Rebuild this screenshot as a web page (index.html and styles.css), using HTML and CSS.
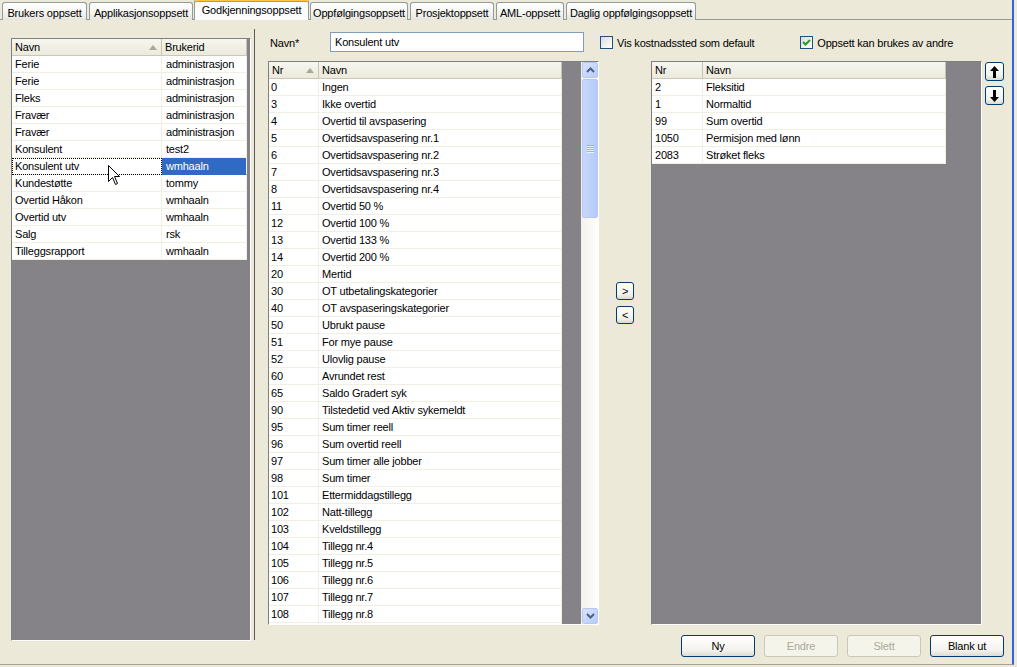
FILE: index.html
```html
<!DOCTYPE html>
<html>
<head>
<meta charset="utf-8">
<link rel="stylesheet" href="styles.css">
</head>
<body>
<div class="window">
  <div class="tabs">
    <div class="tab w1">Brukers oppsett</div>
    <div class="tab w2">Applikasjonsoppsett</div>
    <div class="tab active w3">Godkjenningsoppsett</div>
    <div class="tab w4">Oppfølgingsoppsett</div>
    <div class="tab w5">Prosjektoppsett</div>
    <div class="tab w6">AML-oppsett</div>
    <div class="tab w7">Daglig oppfølgingsoppsett</div>
  </div>
  <div class="page">
    <div class="left-col">
      <div class="grid grid-left">
        <div class="tbl tbl-left">
          <div class="hdr"><div class="hc">Navn<svg class="sort" width="8" height="5" viewBox="0 0 8 5"><polygon points="4,0 8,5 0,5" fill="#aca899"/></svg></div><div class="hc">Brukerid</div></div>
          <div class="row"><div class="c">Ferie</div><div class="c c2">administrasjon</div></div>
          <div class="row"><div class="c">Ferie</div><div class="c c2">administrasjon</div></div>
          <div class="row"><div class="c">Fleks</div><div class="c c2">administrasjon</div></div>
          <div class="row"><div class="c">Fravær</div><div class="c c2">administrasjon</div></div>
          <div class="row"><div class="c">Fravær</div><div class="c c2">administrasjon</div></div>
          <div class="row"><div class="c">Konsulent</div><div class="c c2">test2</div></div>
          <div class="row"><div class="c focus">Konsulent utv</div><div class="c c2 sel">wmhaaln</div></div>
          <div class="row"><div class="c">Kundestøtte</div><div class="c c2">tommy</div></div>
          <div class="row"><div class="c">Overtid Håkon</div><div class="c c2">wmhaaln</div></div>
          <div class="row"><div class="c">Overtid utv</div><div class="c c2">wmhaaln</div></div>
          <div class="row"><div class="c">Salg</div><div class="c c2">rsk</div></div>
          <div class="row"><div class="c">Tilleggsrapport</div><div class="c c2">wmhaaln</div></div>
        </div>
        <svg class="cursor" width="13" height="21" viewBox="0 0 13 21"><path d="M0.5 0.5 L0.5 16.5 L4.5 12.5 L7.5 19.5 L9.5 18.5 L6.5 11.5 L11.5 11.5 Z" fill="#fff" stroke="#000" stroke-width="1"/></svg>
      </div>
    </div>
    <div class="splitter"></div>
    <div class="main">
      <div class="form-row">
        <label class="lbl">Navn*</label>
        <div class="input">Konsulent utv</div>
        <div class="chk chk1"><span class="box"></span><span>Vis kostnadssted som default</span></div>
        <div class="chk chk2"><span class="box"><svg width="11" height="11" viewBox="0 0 11 11"><path d="M2 5 L4.5 7.5 L9 3" fill="none" stroke="#21a121" stroke-width="2"/></svg></span><span>Oppsett kan brukes av andre</span></div>
      </div>
      <div class="lists">
        <div class="grid grid-mid">
          <div class="tbl tbl-mid">
            <div class="hdr"><div class="hc">Nr<svg class="sort" width="8" height="5" viewBox="0 0 8 5"><polygon points="4,0 8,5 0,5" fill="#aca899"/></svg></div><div class="hc">Navn</div></div>
            <div class="row"><div class="c">0</div><div class="c">Ingen</div></div>
            <div class="row"><div class="c">3</div><div class="c">Ikke overtid</div></div>
            <div class="row"><div class="c">4</div><div class="c">Overtid til avspasering</div></div>
            <div class="row"><div class="c">5</div><div class="c">Overtidsavspasering nr.1</div></div>
            <div class="row"><div class="c">6</div><div class="c">Overtidsavspasering nr.2</div></div>
            <div class="row"><div class="c">7</div><div class="c">Overtidsavspasering nr.3</div></div>
            <div class="row"><div class="c">8</div><div class="c">Overtidsavspasering nr.4</div></div>
            <div class="row"><div class="c">11</div><div class="c">Overtid 50 %</div></div>
            <div class="row"><div class="c">12</div><div class="c">Overtid 100 %</div></div>
            <div class="row"><div class="c">13</div><div class="c">Overtid 133 %</div></div>
            <div class="row"><div class="c">14</div><div class="c">Overtid 200 %</div></div>
            <div class="row"><div class="c">20</div><div class="c">Mertid</div></div>
            <div class="row"><div class="c">30</div><div class="c">OT utbetalingskategorier</div></div>
            <div class="row"><div class="c">40</div><div class="c">OT avspaseringskategorier</div></div>
            <div class="row"><div class="c">50</div><div class="c">Ubrukt pause</div></div>
            <div class="row"><div class="c">51</div><div class="c">For mye pause</div></div>
            <div class="row"><div class="c">52</div><div class="c">Ulovlig pause</div></div>
            <div class="row"><div class="c">60</div><div class="c">Avrundet rest</div></div>
            <div class="row"><div class="c">65</div><div class="c">Saldo Gradert syk</div></div>
            <div class="row"><div class="c">90</div><div class="c">Tilstedetid ved Aktiv sykemeldt</div></div>
            <div class="row"><div class="c">95</div><div class="c">Sum timer reell</div></div>
            <div class="row"><div class="c">96</div><div class="c">Sum overtid reell</div></div>
            <div class="row"><div class="c">97</div><div class="c">Sum timer alle jobber</div></div>
            <div class="row"><div class="c">98</div><div class="c">Sum timer</div></div>
            <div class="row"><div class="c">101</div><div class="c">Ettermiddagstillegg</div></div>
            <div class="row"><div class="c">102</div><div class="c">Natt-tillegg</div></div>
            <div class="row"><div class="c">103</div><div class="c">Kveldstillegg</div></div>
            <div class="row"><div class="c">104</div><div class="c">Tillegg nr.4</div></div>
            <div class="row"><div class="c">105</div><div class="c">Tillegg nr.5</div></div>
            <div class="row"><div class="c">106</div><div class="c">Tillegg nr.6</div></div>
            <div class="row"><div class="c">107</div><div class="c">Tillegg nr.7</div></div>
            <div class="row"><div class="c">108</div><div class="c">Tillegg nr.8</div></div>
            <div class="row"><div class="c"></div><div class="c"></div></div>
          </div>
          <div class="fill"></div>
          <div class="vscroll">
            <div class="sbtn"><svg width="9" height="6" viewBox="0 0 9 6"><path d="M1 5 L4.5 1.5 L8 5" fill="none" stroke="#4d6185" stroke-width="2"/></svg></div>
            <div class="thumb"><span class="grip"></span><span class="grip"></span><span class="grip"></span><span class="grip"></span></div>
            <div class="track"></div>
            <div class="sbtn"><svg width="9" height="6" viewBox="0 0 9 6"><path d="M1 1 L4.5 4.5 L8 1" fill="none" stroke="#4d6185" stroke-width="2"/></svg></div>
          </div>
        </div>
        <div class="move-col">
          <div class="xbtn small">&gt;</div>
          <div class="xbtn small">&lt;</div>
        </div>
        <div class="grid grid-right">
          <div class="tbl tbl-right">
            <div class="hdr"><div class="hc">Nr</div><div class="hc">Navn</div></div>
            <div class="row"><div class="c">2</div><div class="c">Fleksitid</div></div>
            <div class="row"><div class="c">1</div><div class="c">Normaltid</div></div>
            <div class="row"><div class="c">99</div><div class="c">Sum overtid</div></div>
            <div class="row"><div class="c">1050</div><div class="c">Permisjon med lønn</div></div>
            <div class="row"><div class="c">2083</div><div class="c">Strøket fleks</div></div>
          </div>
        </div>
        <div class="order-col">
          <div class="xbtn arrow"><svg width="9" height="12" viewBox="0 0 9 12"><polygon points="4.5,0 9,5 6,5 6,12 3,12 3,5 0,5" fill="#000"/></svg></div>
          <div class="xbtn arrow"><svg width="9" height="12" viewBox="0 0 9 12"><polygon points="4.5,12 9,7 6,7 6,0 3,0 3,7 0,7" fill="#000"/></svg></div>
        </div>
      </div>
      <div class="actions">
        <div class="btn">Ny</div>
        <div class="btn disabled">Endre</div>
        <div class="btn disabled">Slett</div>
        <div class="btn">Blank ut</div>
      </div>
    </div>
  </div>
</div>
</body>
</html>
```
FILE: styles.css
```css
html, body {
  margin: 0;
  padding: 0;
}
body {
  width: 1017px;
  height: 667px;
  overflow: hidden;
  background: #ece9d8;
  font-family: "Liberation Sans", Arial, sans-serif;
  font-size: 11px;
  color: #000;
  letter-spacing: -0.2px;
}
.window {
  width: 1014px;
  height: 665px;
  box-sizing: border-box;
  border-bottom: 1px solid #a5a296;
  border-right: 2px solid #2e63e2;
  background: #ece9d8;
  display: flex;
  flex-direction: column;
}
/* Tabs */
.tabs {
  display: flex;
  align-items: flex-end;
  gap: 2px;
  height: 20px;
  padding-left: 2px;
  box-sizing: border-box;
  border-bottom: 1px solid #919b9c;
}
.tab {
  height: 18px;
  box-sizing: border-box;
  border: 1px solid #919b9c;
  border-bottom: none;
  border-radius: 3px 3px 0 0;
  background: linear-gradient(#ffffff, #f3f3ef 60%, #e6e5dd);
  display: flex;
  align-items: center;
  justify-content: center;
  white-space: nowrap;
  margin-bottom: -1px;
  padding-top: 2px;
}
.tab.active {
  height: 21px;
  background: #fcfcfe;
  border-top: 2px solid #ffc83c;
  box-shadow: inset 0 1px 0 #e68b2c;
  padding-top: 0;
  padding-bottom: 2px;
  position: relative;
  z-index: 1;
  margin-left: -1px;
  margin-right: -1px;
}
.w1 { width: 85px; }
.w2 { width: 104px; }
.w3 { width: 115px; }
.w4 { width: 98px; }
.w5 { width: 84px; }
.w6 { width: 68px; }
.w7 { width: 130px; }

.page {
  display: flex;
  flex: 1;
}
.left-col {
  width: 254px;
  padding: 18px 0 0 11px;
  box-sizing: border-box;
}
.splitter {
  width: 1px;
  margin-top: 9px;
  height: 611px;
  background: #5c5b57;
}
.main {
  flex: 1;
  padding-left: 13px;
  display: flex;
  flex-direction: column;
}
/* Grids */
.grid {
  box-sizing: border-box;
  border: 1px solid;
  border-color: #7f7f7f #ffffff #ffffff #7f7f7f;
  background: #858288;
  overflow: hidden;
  position: relative;
}
.grid-left {
  width: 240px;
  height: 603px;
}
.tbl {
  background: transparent;
}
.tbl-left { width: 235px; }
.tbl-left .hdr, .tbl-left .row { grid-template-columns: 150px 85px; }
.tbl-mid { width: 293px; flex: none; }
.tbl-mid .hdr, .tbl-mid .row { grid-template-columns: 50px 243px; }
.tbl-right { width: 294px; }
.tbl-right .hdr, .tbl-right .row { grid-template-columns: 51px 243px; }

.hdr {
  display: grid;
  height: 17px;
  background: linear-gradient(#f7f6f0, #ebeadb);
  box-sizing: border-box;
  border-bottom: 1px solid #cbc7b8;
}
.hc {
  box-sizing: border-box;
  border-right: 1px solid #c7c5b2;
  padding-left: 3px;
  line-height: 16px;
  display: flex;
  align-items: center;
  justify-content: space-between;
  padding-right: 4px;
}
.sort {
  flex: none;
}
.row {
  display: grid;
  height: 17px;
  background: #fff;
}
.c {
  box-sizing: border-box;
  border-right: 1px solid #f1efe2;
  border-bottom: 1px solid #f1efe2;
  padding-left: 3px;
  line-height: 16px;
  white-space: nowrap;
  overflow: hidden;
}
.tbl-left .c2 { padding-left: 4px; }
.tbl-mid .c:first-child { padding-left: 2px; }
.sel {
  background: #316ac5;
  color: #fff;
  border-color: #316ac5;
  border-right-color: #f1efe2;
}
.focus {
  outline: 1px dotted #000;
  outline-offset: -1px;
}
.cursor {
  position: absolute;
  left: 96px;
  top: 126px;
}
/* Form row */
.form-row {
  display: flex;
  align-items: center;
  margin-top: 12px;
  height: 20px;
}
.lbl {
  width: 62px;
  padding-left: 2px;
  box-sizing: border-box;
  padding-top: 2px;
}
.input {
  width: 254px;
  height: 20px;
  box-sizing: border-box;
  border: 1px solid #7f9db9;
  background: #fff;
  padding-left: 4px;
  line-height: 18px;
}
.chk {
  display: flex;
  align-items: center;
  gap: 4px;
  padding-top: 1px;
}
.chk1 { margin-left: 16px; }
.chk2 { margin-left: 46px; }
.box {
  width: 13px;
  height: 13px;
  box-sizing: border-box;
  border: 1px solid #1c5180;
  background: linear-gradient(135deg, #dcdcd7, #ffffff);
  display: flex;
  align-items: center;
  justify-content: center;
}
/* Lists */
.lists {
  display: flex;
  margin-top: 9px;
  height: 564px;
}
.grid-mid {
  width: 331px;
  height: 564px;
  display: flex;
}
.fill { flex: 1; }
.vscroll {
  width: 17px;
  display: flex;
  flex-direction: column;
  background: linear-gradient(to right, #f3f1ec, #fefefb);
}
.sbtn {
  height: 16px;
  box-sizing: border-box;
  border: 1px solid #b4c8f6;
  border-radius: 2px;
  background: linear-gradient(135deg, #d7e2fd, #b9cdfb);
  display: flex;
  align-items: center;
  justify-content: center;
  margin: 0 0 0 1px;
}
.thumb {
  height: 139px;
  box-sizing: border-box;
  border: 1px solid #b4c8f6;
  border-radius: 2px;
  margin: 1px 0 0 1px;
  background: linear-gradient(to right, #c9d8fc, #bccffc 60%, #b4c9fa);
  display: flex;
  flex-direction: column;
  align-items: center;
  justify-content: center;
  gap: 1px;
}
.grip {
  width: 7px;
  height: 1px;
  background: #8cb0f8;
  box-shadow: 0 1px 0 #eef4fe;
}
.track { flex: 1; }
.move-col {
  width: 52px;
  display: flex;
  flex-direction: column;
  align-items: flex-start;
  padding-left: 17px;
  padding-top: 221px;
  gap: 6px;
  box-sizing: border-box;
}
.xbtn {
  box-sizing: border-box;
  border: 1px solid #003c74;
  border-radius: 3px;
  background: linear-gradient(#ffffff, #f3f2ec 70%, #dcdad0);
  display: flex;
  align-items: center;
  justify-content: center;
}
.xbtn.small {
  width: 18px;
  height: 18px;
  line-height: 16px;
}
.grid-right {
  width: 331px;
  height: 564px;
}
.order-col {
  display: flex;
  flex-direction: column;
  padding-left: 3px;
  padding-top: 1px;
  gap: 5px;
}
.xbtn.arrow {
  width: 19px;
  height: 19px;
}
/* Actions */
.actions {
  display: flex;
  justify-content: flex-end;
  gap: 9px;
  padding-right: 8px;
  margin-top: 10px;
}
.btn {
  width: 74px;
  height: 22px;
  box-sizing: border-box;
  border: 1px solid #003c74;
  border-radius: 3px;
  background: linear-gradient(#ffffff, #f4f3ee 70%, #dedcd2);
  display: flex;
  align-items: center;
  justify-content: center;
}
.btn.disabled {
  border-color: #c9c7ba;
  background: #f5f4ea;
  color: #aca899;
}
```
